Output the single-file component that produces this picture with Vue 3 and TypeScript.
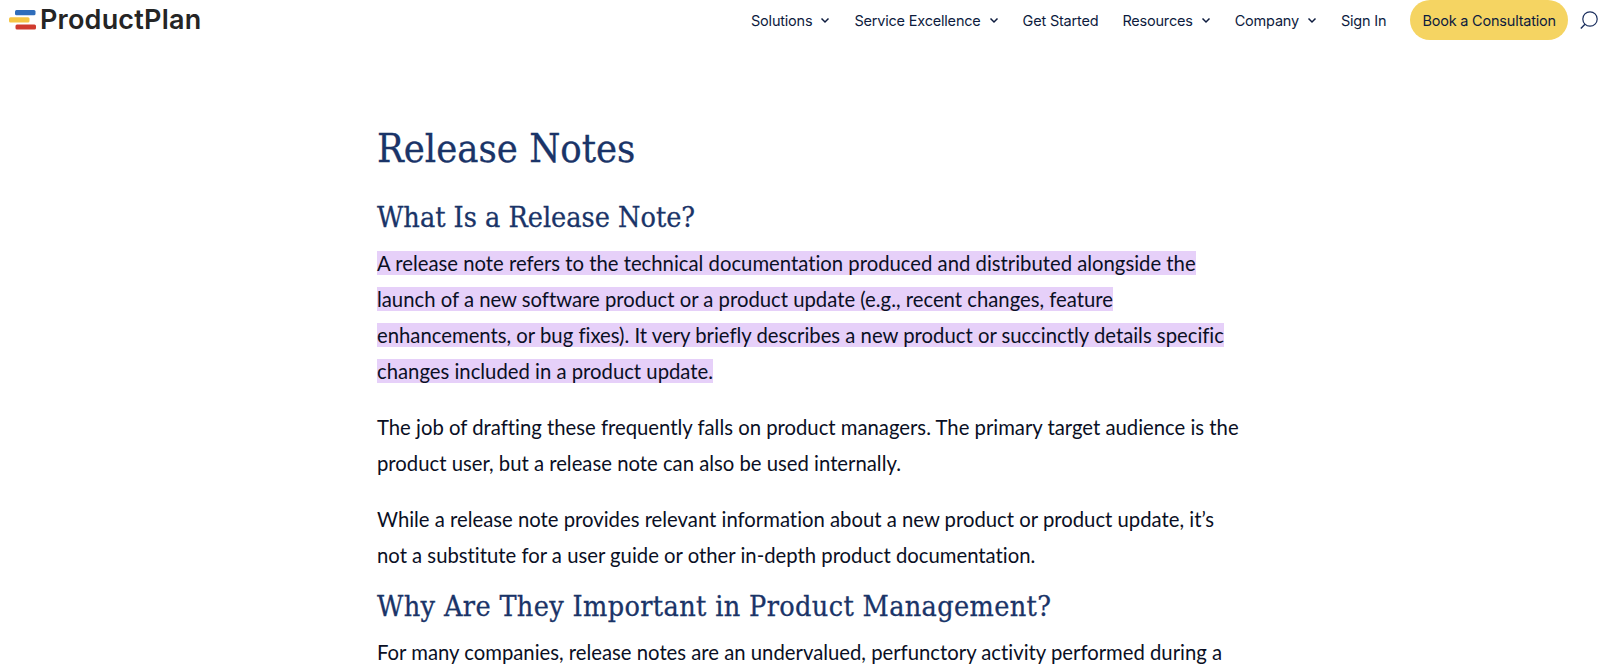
<script setup lang="ts">
interface NavItem { label: string; caret: boolean }
const nav: NavItem[] = [
  { label: 'Solutions', caret: true },
  { label: 'Service Excellence', caret: true },
  { label: 'Get Started', caret: false },
  { label: 'Resources', caret: true },
  { label: 'Company', caret: true },
  { label: 'Sign In', caret: false },
]
const highlighted = [
  'A release note refers to the technical documentation produced and distributed alongside the',
  'launch of a new software product or a product update (e.g., recent changes, feature',
  'enhancements, or bug fixes). It very briefly describes a new product or succinctly details specific',
  'changes included in a product update.',
]
</script>

<template>
  <div class="page">
    <header class="header">
      <a class="logo">
        <svg class="mark" width="28" height="20" viewBox="0 0 28 20">
          <rect x="6" y="0" width="20.5" height="5.2" rx="1.5" fill="#2f6dbb" />
          <rect x="0" y="7.2" width="20.5" height="5.2" rx="1.5" fill="#f5c544" />
          <rect x="6.5" y="14.4" width="20.5" height="5.2" rx="1.5" fill="#d03b2f" />
        </svg>
        <span class="logo-text">ProductPlan</span>
      </a>
      <nav class="nav">
        <a v-for="item in nav" :key="item.label" class="nav-item">
          {{ item.label }}
          <svg v-if="item.caret" class="caret" width="10" height="7" viewBox="0 0 10 7">
            <path d="M1.5 1.5 L5 5 L8.5 1.5" fill="none" stroke="#0d1b3e" stroke-width="1.5" />
          </svg>
        </a>
        <a class="cta">Book a Consultation</a>
        <svg class="search" width="18" height="18" viewBox="0 0 18 18">
          <circle cx="10" cy="8" r="7.2" fill="none" stroke="#1b2f5e" stroke-width="1.2" />
          <path d="M5 13.2 L0.8 17.5" fill="none" stroke="#1b2f5e" stroke-width="1.4" />
        </svg>
      </nav>
    </header>
    <main class="content">
      <h1>Release Notes</h1>
      <h2>What Is a Release Note?</h2>
      <p>
        <template v-for="line in highlighted" :key="line"><mark>{{ line }}</mark><br /></template>
      </p>
      <p>The job of drafting these frequently falls on product managers. The primary target audience is the<br />product user, but a release note can also be used internally.</p>
      <p class="tail">While a release note provides relevant information about a new product or product update, it’s<br />not a substitute for a user guide or other in-depth product documentation.</p>
      <h2 class="second">Why Are They Important in Product Management?</h2>
      <p>For many companies, release notes are an undervalued, perfunctory activity performed during a</p>
    </main>
  </div>
</template>

<style>
html, body { margin: 0; background: #fff; overflow: hidden; }
</style>

<style scoped>
.page { height: 667px; overflow: hidden; font-family: Lato, "Open Sans", sans-serif; color: #0a0f24; }
.header { display: flex; justify-content: space-between; align-items: flex-start; height: 40px; }
.logo { display: flex; align-items: center; gap: 3px; margin: 10px 0 0 9px; }
.logo-text { font-family: Inter, sans-serif; font-weight: 600; font-size: 27px; line-height: 20px; letter-spacing: .2px; color: #252525; }
.nav { display: flex; align-items: center; height: 40px; margin-right: 12px; font-family: Inter, sans-serif; font-size: 14.5px; letter-spacing: -.2px; color: #0d1b3e; }
.nav-item { display: flex; align-items: center; gap: 8px; margin-right: 24px; white-space: nowrap; }
.cta { background: #f5d462; border-radius: 20px; padding: 0 12px; height: 40px; line-height: 41px; white-space: nowrap; color: #0d1b3e; }
.search { margin-left: 12px; }
.content { width: 850px; margin-left: 377px; padding-top: 80px; }
h1, h2 { font-family: "DejaVu Serif", serif; font-stretch: condensed; font-weight: 400; color: #1a3468; -webkit-text-stroke: .3px #1a3468; }
h1 { font-size: 39.6px; line-height: 56px; margin: 0 0 25px; }
h2 { font-size: 28.5px; line-height: 34px; margin: 0 0 10px; }
h2.second { margin-bottom: 10px; letter-spacing: .35px; }
p { font-size: 20.3px; line-height: 36px; margin: 0 0 20px; white-space: nowrap; font-variant-ligatures: none; }
p.tail { margin-bottom: 17px; }
mark { background: #e6d0f9; color: inherit; }
</style>
